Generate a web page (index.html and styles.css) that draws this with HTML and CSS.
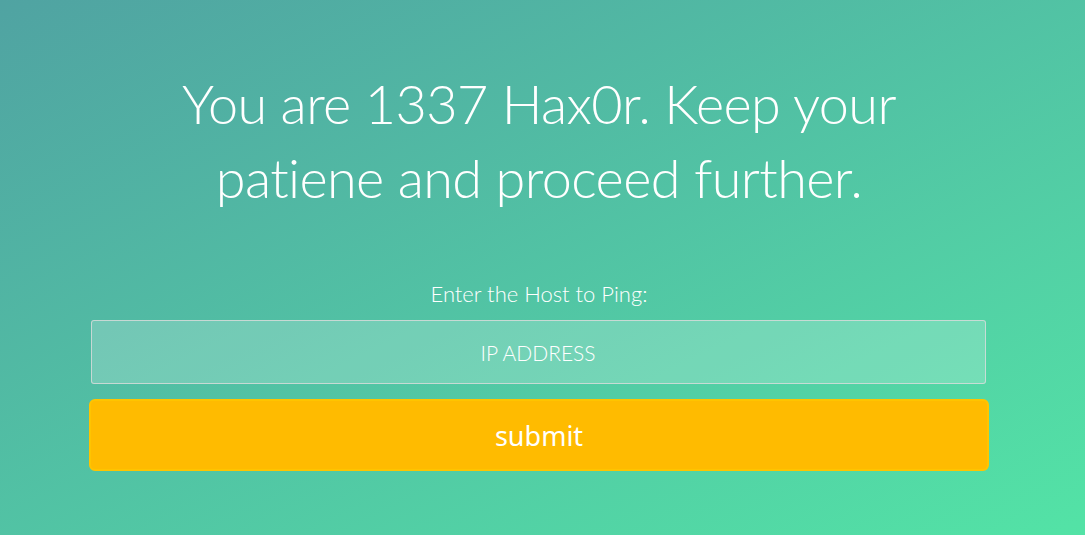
FILE: index.html
```html
<!DOCTYPE html>
<html lang="en">
<head>
<meta charset="utf-8">
<title>Ping</title>
<link rel="stylesheet" href="styles.css">
</head>
<body>
<div class="wrapper">
  <div class="container">
    <h1 class="title">You are 1337 Hax0r. Keep your patiene and proceed further.</h1>
    <form class="form">
      <label class="label" for="ip">Enter the Host to Ping:</label>
      <input class="input" id="ip" type="text" placeholder="IP ADDRESS">
      <button class="submit" type="button">submit</button>
    </form>
  </div>
</div>
</body>
</html>
```

FILE: styles.css
```css
* { box-sizing: border-box; }
html, body { margin: 0; padding: 0; height: 100%; }
body {
  font-family: "Lato", "Liberation Sans", sans-serif;
  font-weight: 300;
  color: #fff;
  overflow: hidden;
}
.wrapper {
  width: 100%;
  height: 100%;
  padding-right: 7px;
  background: linear-gradient(to bottom right, #50a3a2 0%, #53e3a6 100%);
}
.container {
  width: 900px;
  margin: 0 auto;
  padding-top: 67px;
  text-align: center;
}
.title {
  margin: 0 auto;
  width: 760px;
  font-size: 54px;
  letter-spacing: -0.6px;
  line-height: 74px;
  font-weight: 300;
}
.form {
  display: flex;
  flex-direction: column;
  align-items: center;
  margin-top: 67px;
}
.label {
  font-size: 22px;
  line-height: 24px;
  font-weight: 300;
  margin-bottom: 14px;
}
.input {
  width: 895px;
  height: 64px;
  margin-left: -2px;
  border: 1px solid rgba(220, 220, 220, 0.8);
  border-radius: 3px;
  background: rgba(255, 255, 255, 0.2);
  color: #fff;
  text-align: center;
  font-family: "Lato", "Liberation Sans", sans-serif;
  font-weight: 300;
  font-size: 21px;
  outline: none;
}
.input::placeholder { color: #fff; opacity: 1; }
.submit {
  margin-top: 15px;
  width: 900px;
  height: 72px;
  background: #ffbb00;
  border: 2px solid #ffc400;
  border-radius: 6px;
  color: #fff;
  font-family: "Noto Sans", "Open Sans", sans-serif;
  font-weight: 400;
  font-size: 27px;
  padding: 0;
}
```
